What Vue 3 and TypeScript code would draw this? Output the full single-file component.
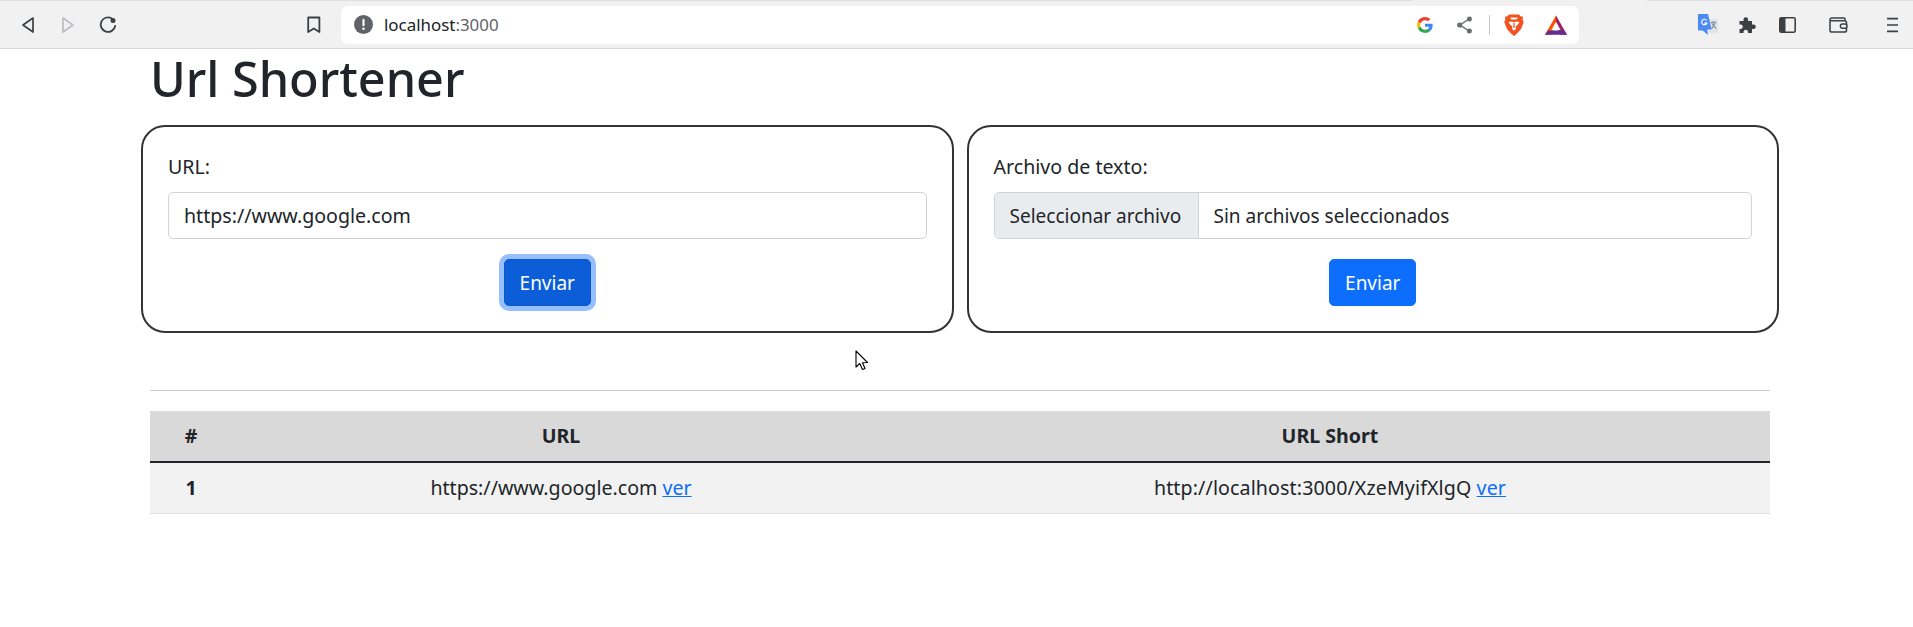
<script setup lang="ts">
const urlValue = 'https://www.google.com'

const rows = [
  { id: 1, url: 'https://www.google.com', short: 'http://localhost:3000/XzeMyifXlgQ' },
]
</script>

<template>
  <div class="page">
    <header class="toolbar">
      <i class="tab-gap"></i>
      <div class="nav">
        <svg class="ic back" width="18" height="20" viewBox="0 0 18 20"><path d="M16 3 L6 10 L16 17 Z" fill="none" stroke="#3c4043" stroke-width="1.7" stroke-linejoin="round" /></svg>
        <svg class="ic fwd" width="18" height="20" viewBox="0 0 18 20"><path d="M4 3 L14 10 L4 17 Z" fill="none" stroke="#bcbec1" stroke-width="1.7" stroke-linejoin="round" /></svg>
        <svg class="ic reload" width="20" height="20" viewBox="0 0 20 20">
          <path d="M17.2 11 A7.300 7.300 0 1 1 13.500 3.200" fill="none" stroke="#3c4043" stroke-width="1.8" stroke-linecap="round" />
          <circle cx="15" cy="5.500" r="2.500" fill="#3c4043" />
        </svg>
        <svg class="ic mark" width="16" height="20" viewBox="0 0 16 20"><path d="M2.200 2.500 H13.400 V17 L7.800 13.500 L2.200 17 Z" fill="none" stroke="#3c4043" stroke-width="1.8" stroke-linejoin="round" /></svg>
      </div>
      <div class="omnibox">
        <svg width="19" height="19" viewBox="0 0 18 18">
          <circle cx="9" cy="9" r="9" fill="#5f6368" />
          <rect x="8" y="3.600" width="2" height="7" rx="1" fill="#fff" />
          <circle cx="9" cy="13" r="1.200" fill="#fff" />
        </svg>
        <span class="address">localhost<span class="port">:3000</span></span>
        <span class="omni-icons">
          <svg class="g" width="16" height="16" viewBox="0 0 48 48">
            <path fill="#EA4335" d="M24 9.500c3.500 0 6.700 1.300 9.200 3.600l6.900-6.900C35.900 2.400 30.400 0 24 0 14.600 0 6.500 5.400 2.600 13.200l8 6.200C12.500 13.700 17.800 9.500 24 9.500z" />
            <path fill="#4285F4" d="M47 24.500c0-1.600-.2-3.100-.4-4.500H24v9h12.900c-.6 3-2.200 5.500-4.800 7.200l7.700 6c4.500-4.200 7.200-10.300 7.200-17.700z" />
            <path fill="#FBBC05" d="M10.600 28.600c-.5-1.500-.8-3-.8-4.600s.3-3.100.8-4.600l-8-6.200C.9 16.500 0 20.100 0 24s.9 7.500 2.600 10.800l8-6.200z" />
            <path fill="#34A853" d="M24 48c6.500 0 11.900-2.100 15.800-5.800l-7.700-6c-2.100 1.400-4.900 2.300-8.100 2.300-6.200 0-11.500-4.200-13.400-9.900l-8 6.200C6.500 42.600 14.600 48 24 48z" />
          </svg>
          <svg class="share" width="15" height="18" viewBox="0 0 15 18">
            <path d="M12 3 L3 9 L12 15" fill="none" stroke="#6b6e72" stroke-width="1.500" />
            <circle cx="12.400" cy="3" r="2.500" fill="#6b6e72" />
            <circle cx="2.700" cy="9" r="2.600" fill="#6b6e72" />
            <circle cx="12.400" cy="15" r="2.500" fill="#6b6e72" />
          </svg>
          <i class="sep"></i>
          <svg class="brave" width="20" height="22" viewBox="0 0 20 22">
            <path d="M5 .5 H15 L16.800 2.500 L19 2.500 L18.600 6 L19.800 8 L17 15 L13 19.500 L10 22 L7 19.500 L3 15 L.2 8 L1.400 6 L1 2.500 L3.200 2.500 Z" fill="#f1521f" />
            <path d="M4.500 8 L8 7.500 L10 8.500 L12 7.500 L15.500 8 L13.500 11 L12 12 L11.800 15 L10 16.800 L8.200 15 L8 12 L6.500 11 Z" fill="#fff" />
            <path d="M6 3.500 H14 L12.500 5.500 H7.500 Z" fill="#fff" />
            <path d="M9.400 9 V14 M10.600 9 V14" stroke="#f1521f" stroke-width=".7" />
          </svg>
          <svg class="bat" width="22" height="20" viewBox="0 0 24 21">
            <path d="M12 0 L24 21 H16 L12 8 Z" fill="#9e1f63" />
            <path d="M12 0 L0 21 H7 L12 8 Z" fill="#ff5000" />
            <path d="M0 21 L3 16.500 H21 L24 21 Z" fill="#662d91" />
            <path d="M12 7 L7 16 H17 Z" fill="#fff" />
          </svg>
        </span>
      </div>
      <div class="extras">
        <svg class="translate" width="22" height="21" viewBox="0 0 22 23">
          <rect x="8" y="5" width="14" height="16" fill="#e2e5e8" />
          <path d="M14 9 H20 M17 8 V10 M15 16 L19 10 M15 10 L20 16" stroke="#7a8a99" stroke-width="1.100" fill="none" />
          <path d="M1 0 H11 L15 17 H10 L11 23 L5 18 H1 Q0 18 0 17 V1 Q0 0 1 0 Z" fill="#4c8bf5" />
          <path d="M9.500 7 A3 3 0 1 0 9.800 10 H7" fill="none" stroke="#fff" stroke-width="1.300" />
        </svg>
        <svg class="puzzle" width="19" height="18" viewBox="0 0 18 18"><path d="M1 5 H5 V3.500 A2.300 2.300 0 0 1 9.600 3.500 V5 H13.500 V8.500 H15 A2.300 2.300 0 0 1 15 13.100 H13.500 V17 H9.500 V15.500 A2.300 2.300 0 0 0 5 15.500 V17 H1 V13 H2.500 A2.300 2.300 0 0 0 2.500 8.500 H1 Z" fill="#3c4043" /></svg>
        <svg class="sidebar" width="17" height="16" viewBox="0 0 17 16"><rect x=".8" y=".8" width="15.400" height="14.400" rx="1.500" fill="none" stroke="#3c4043" stroke-width="1.600" /><rect x="1" y="1" width="5.500" height="14" fill="#3c4043" /></svg>
        <svg class="wallet" width="19" height="16" viewBox="0 0 20 17">
          <path d="M17 4 V2.500 Q17 1 15.500 1 H3 Q1 1 1 3 V14 Q1 16 3 16 H16.500 Q18.500 16 18.500 14 V6 Q18.500 4 16.500 4 H1.500" fill="none" stroke="#3c4043" stroke-width="1.600" />
          <rect x="12" y="7.500" width="7" height="4.500" rx="2.200" fill="#f1f1f1" stroke="#3c4043" stroke-width="1.500" />
        </svg>
        <svg class="menu" width="11" height="16" viewBox="0 0 12 16"><path d="M0 1 H12 M0 8 H12 M0 15 H12" stroke="#3c4043" stroke-width="1.800" /></svg>
      </div>
    </header>

    <main class="container">
      <h1 class="title">Url Shortener</h1>

      <div class="cards">
        <form class="card" @submit.prevent>
          <label class="label" for="url">URL:</label>
          <input id="url" class="control" type="text" :value="urlValue" />
          <div class="actions">
            <button class="btn focused" type="submit">Enviar</button>
          </div>
        </form>
        <form class="card" @submit.prevent>
          <span class="label">Archivo de texto:</span>
          <div class="control file">
            <span class="file-btn">Seleccionar archivo</span>
            <span class="file-name">Sin archivos seleccionados</span>
          </div>
          <div class="actions">
            <button class="btn" type="submit">Enviar</button>
          </div>
        </form>
      </div>

      <hr class="rule" />

      <table class="links">
        <thead>
          <tr>
            <th class="col-id">#</th>
            <th class="col-url">URL</th>
            <th>URL Short</th>
          </tr>
        </thead>
        <tbody>
          <tr v-for="row in rows" :key="row.id">
            <th>{{ row.id }}</th>
            <td>{{ row.url }} <a href="#">ver</a></td>
            <td class="short">{{ row.short }} <a href="#">ver</a></td>
          </tr>
        </tbody>
      </table>
    </main>

    <svg class="cursor" width="14" height="21" viewBox="0 0 14 21"><path d="M1 1 V17 L4.800 13.500 L7.500 19.500 L10 18.500 L7.500 12.800 L12.500 12.500 Z" fill="#fff" stroke="#000" stroke-width="1.100" stroke-linejoin="round" /></svg>
  </div>
</template>

<style>
html, body {
  margin: 0;
  background: #fff;
}
</style>

<style scoped>
.page {
  position: relative;
  height: 627px;
  overflow: hidden;
  font-family: "Noto Sans", sans-serif;
  font-size: 19px;
  color: #212529;
}

.toolbar {
  position: relative;
  display: flex;
  align-items: center;
  height: 47px;
  background: #f1f1f2;
  border-top: 1px solid #dcdfe3;
  border-bottom: 1px solid #d3d6db;
}
.tab-gap {
  position: absolute;
  left: 1413px;
  top: -1px;
  width: 234px;
  height: 1px;
  background: #f1f1f2;
}
.nav {
  display: flex;
  align-items: center;
  width: 341px;
  flex: none;
}
.ic { flex: none; }
.back { margin-left: 17px; }
.fwd { margin-left: 24px; }
.reload { margin-left: 21px; }
.mark { margin-left: 188px; }

.omnibox {
  display: flex;
  align-items: center;
  box-sizing: border-box;
  width: 1238px;
  height: 38px;
  padding-left: 13px;
  background: #fff;
  border-radius: 7px;
  flex: none;
}
.address {
  margin-left: 11px;
  font-size: 16.9px;
  color: #202124;
}
.port { color: #5f6368; }
.omni-icons {
  margin-left: auto;
  display: flex;
  align-items: center;
}
.share { margin-left: 24px; }
.sep {
  width: 1px;
  height: 20px;
  margin-left: 17px;
  background: #c6c8cb;
}
.brave { margin-left: 14px; }
.bat { margin-left: 21px; margin-right: 12px; }

.extras {
  display: flex;
  align-items: center;
  flex: none;
}
.translate { margin-left: 118px; }
.puzzle { margin-left: 19px; }
.sidebar { margin-left: 22px; }
.wallet { margin-left: 33px; }
.menu { margin-left: 39px; }

.container {
  width: 1620px;
  margin-left: 150px;
}
.title {
  margin: 0;
  height: 76px;
  font-size: 48.5px;
  font-weight: 500;
  line-height: 58px;
}

.cards {
  display: flex;
  gap: 13px;
  margin: 0 -9px;
}
.card {
  box-sizing: border-box;
  width: 812.5px;
  height: 208px;
  padding: 25px;
  border: 2px solid #333;
  border-radius: 24px;
}
.label {
  display: block;
  height: 40px;
  line-height: 30px;
  font-size: 19.6px;
}
.control {
  display: flex;
  box-sizing: border-box;
  width: 100%;
  height: 47px;
  padding: 0 15px;
  border: 1px solid #ced4da;
  border-radius: 5px;
  font: inherit;
  font-size: 19.6px;
  color: #212529;
  outline: none;
}
.file {
  align-items: stretch;
  padding: 0;
  overflow: hidden;
  font-size: 19px;
}
.file-btn {
  display: flex;
  align-items: center;
  box-sizing: border-box;
  width: 204px;
  padding: 0 15px;
  background: #e9ecef;
  border-right: 1px solid #ced4da;
  white-space: nowrap;
}
.file-name {
  display: flex;
  align-items: center;
  padding-left: 15px;
}
.actions {
  display: flex;
  justify-content: center;
  margin-top: 20px;
}
.btn {
  box-sizing: border-box;
  width: 87px;
  height: 47px;
  padding: 0;
  border: 1px solid #0d6efd;
  border-radius: 5px;
  background: #0d6efd;
  color: #fff;
  font: inherit;
}
.btn.focused {
  background: #0b5ed7;
  border-color: #0a58ca;
  box-shadow: 0 0 0 5px #98bffd;
}

.rule {
  margin: 57px 0 20px;
  height: 1px;
  border: 0;
  background: #c8c9ca;
}

.links {
  width: 100%;
  table-layout: fixed;
  border-collapse: separate;
  border-spacing: 0;
  text-align: center;
  font-size: 19.6px;
}
.links th, .links td {
  box-sizing: border-box;
  padding: 0 0 2px;
  font-weight: 400;
}
.links th { font-weight: 700; }
.col-id { width: 82px; }
.col-url { width: 658px; }
.links thead th {
  height: 52px;
  background: #d9d9d9;
  border-bottom: 2px solid #212529;
}
.links tbody th, .links tbody td {
  height: 51px;
  background: #f2f2f2;
  border-bottom: 1px solid #dee2e6;
}
.links a { color: #0d6efd; }
.short { letter-spacing: .12px; }

.cursor {
  position: absolute;
  left: 855px;
  top: 350px;
}
</style>
